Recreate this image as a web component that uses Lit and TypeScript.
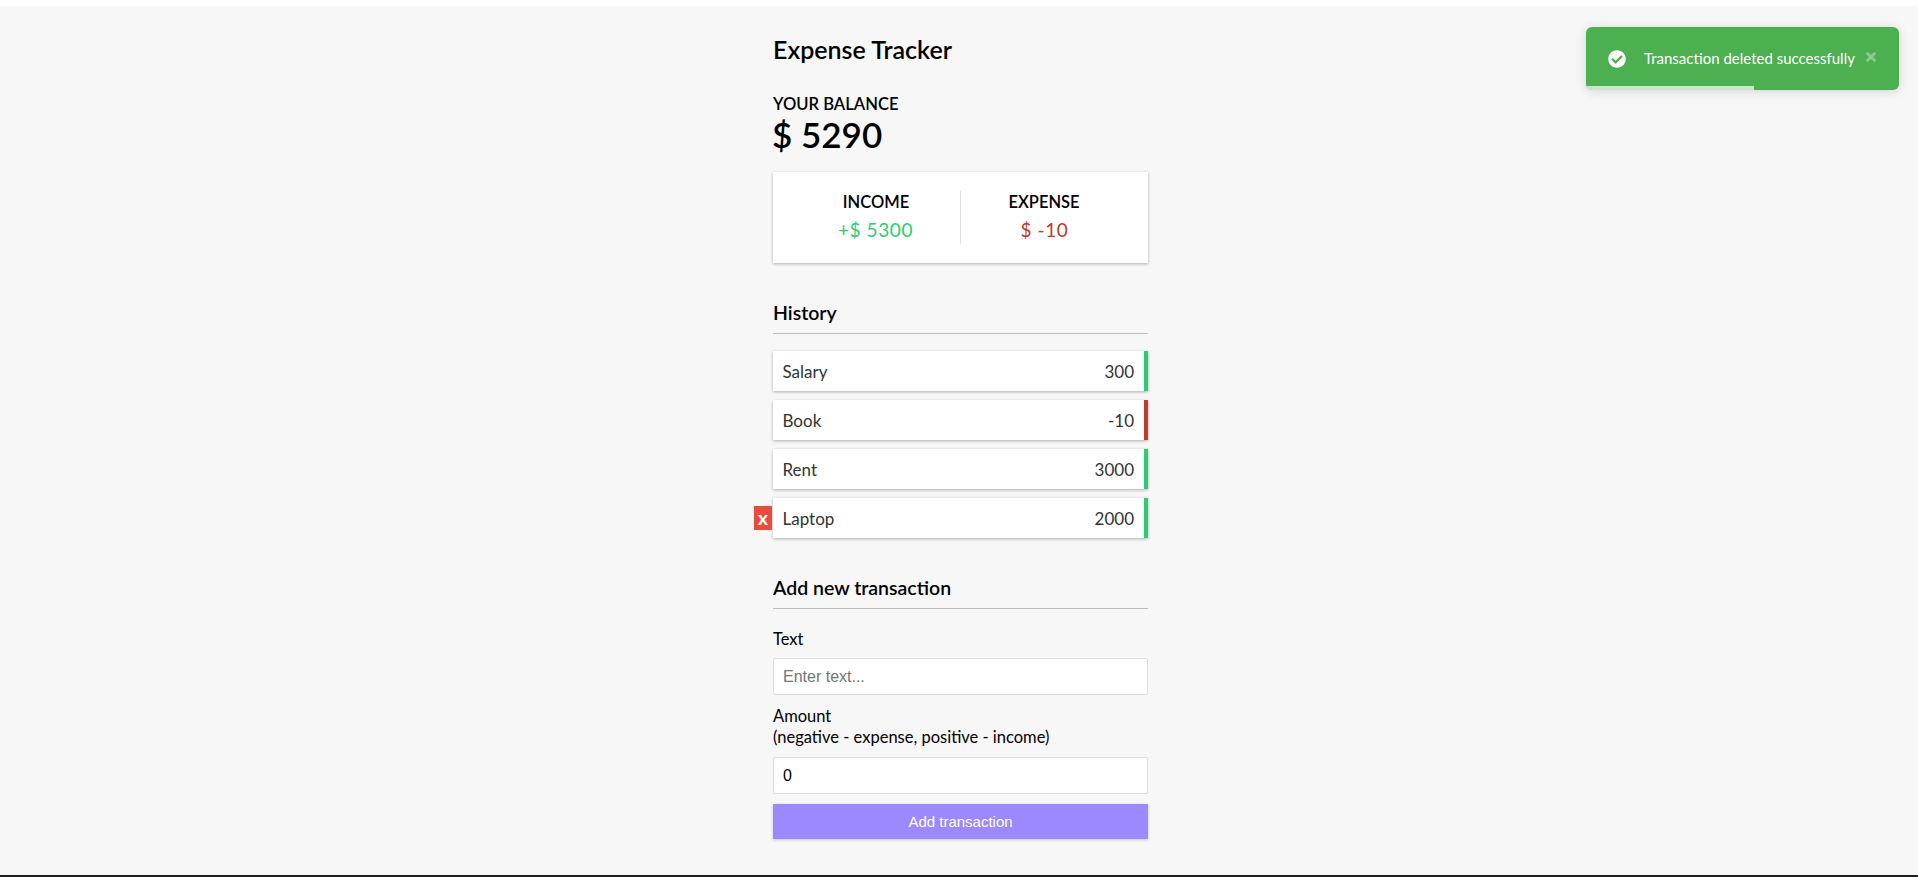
import { LitElement, html, css } from "lit";
import { customElement } from "lit/decorators.js";

const transactions = [
  { text: "Salary", amount: 300 },
  { text: "Book", amount: -10 },
  { text: "Rent", amount: 3000 },
  { text: "Laptop", amount: 2000, hovered: true },
];

@customElement("app-root")
export class AppRoot extends LitElement {
  static styles = css`
    :host {
      display: block;
      height: 877px;
      overflow: hidden;
      background: #fff;
      font-family: Lato, "Liberation Sans", sans-serif;
      color: #000;
      position: relative;
    }
    * {
      box-sizing: border-box;
    }
    .page {
      margin-top: 6px;
      height: 871px;
      background: #f7f7f7;
      border-bottom: 2px solid #1c1c1c;
      display: flex;
      justify-content: center;
    }
    .container {
      width: 375px;
      margin-left: 3px;
      padding-top: 27px;
    }
    h2 {
      margin: 0;
      font-size: 25px;
      line-height: 32px;
      font-weight: 600;
    }
    .balance-label {
      margin: 30px 0 0;
      font-size: 16.6px;
      line-height: 18px;
      font-weight: 600;
      text-transform: uppercase;
    }
    .balance {
      margin: 0 0 0 -1px;
      font-size: 35px;
      line-height: 42px;
      font-weight: 600;
    }
    .summary {
      margin-top: 17px;
      height: 91px;
      background: #fff;
      box-shadow: 0 1px 3px rgba(0, 0, 0, 0.3);
      display: flex;
      align-items: center;
      padding: 0 20px;
    }
    .summary > div {
      flex: 1;
      text-align: center;
      height: 53px;
    }
    .summary > div:first-child {
      border-right: 1px solid #dedede;
    }
    .summary h4 {
      margin: 0 0 0 -1px;
      font-size: 16.5px;
      line-height: 20px;
      padding-top: 1px;
      font-weight: 600;
      text-transform: uppercase;
    }
    .summary p {
      margin: 4px 0 0;
      font-size: 19px;
      line-height: 27px;
      letter-spacing: 0.6px;
    }
    .summary p.plus {
      margin-left: -2px;
    }
    .plus {
      color: #2ecc71;
    }
    .minus {
      color: #c0392b;
    }
    h3 {
      margin: 0;
      font-size: 19.5px;
      line-height: 24px;
      font-weight: 600;
      border-bottom: 1px solid #bbb;
      padding-bottom: 9px;
    }
    .history {
      margin-top: 37px;
    }
    .history h3 {
      padding-top: 1px;
      padding-bottom: 8px;
    }
    .list {
      list-style: none;
      margin: 17px 0 0;
      padding: 0;
    }
    .list li {
      position: relative;
      height: 40px;
      margin-bottom: 9px;
      padding: 0 10px 0 9.5px;
      background: #fff;
      color: #333;
      font-size: 17px;
      line-height: 21px;
      box-shadow: 0 1px 3px rgba(0, 0, 0, 0.3);
      display: flex;
      justify-content: space-between;
      align-items: center;
      border-right: 4px solid #2ecc71;
    }
    .list li.minus-item {
      border-right-color: #c0392b;
    }
    .delete {
      position: absolute;
      left: -19px;
      top: 8px;
      width: 18px;
      height: 24px;
      background: #e74c3c;
      color: #fff;
      font-size: 19px;
      font-weight: 700;
      display: flex;
      align-items: center;
      justify-content: center;
      line-height: 20px;
    }
    .add {
      margin-top: 38px;
    }
    .add h3 {
      padding-bottom: 8px;
    }
    label {
      display: block;
      font-size: 16.5px;
      line-height: 21px;
    }
    .text-label {
      margin-top: 20px;
    }
    .text-label + input {
      margin-top: 8px;
    }
    .amount-label {
      margin-top: 11px;
    }
    input {
      display: block;
      width: 100%;
      height: 37px;
      margin-top: 9px;
      padding: 10px 9px;
      border: 1px solid #dedede;
      border-radius: 2px;
      background: #fff;
      font-family: "Liberation Sans", Arial, sans-serif;
      font-size: 16px;
      color: #000;
    }
    input::placeholder {
      color: #757575;
    }
    button.btn {
      display: block;
      width: 100%;
      height: 35px;
      margin-top: 10px;
      border: 0;
      background: #9c88ff;
      color: #fff;
      font-family: "Liberation Sans", Arial, sans-serif;
      font-size: 15px;
      box-shadow: 0 1px 3px rgba(0, 0, 0, 0.2);
    }
    .toast {
      position: absolute;
      left: 1586px;
      top: 27px;
      width: 313px;
      height: 63px;
      border-radius: 6px;
      background: #4caf50;
      color: #fff;
      box-shadow: 0 1px 10px rgba(0, 0, 0, 0.1), 0 2px 15px rgba(0, 0, 0, 0.05);
      overflow: hidden;
      display: flex;
      align-items: center;
      padding: 0 0 0 22px;
      font-size: 15px;
    }
    .toast span {
      margin-top: -2px;
    }
    .toast svg.check {
      width: 18px;
      height: 18px;
      flex: none;
      margin-right: 18px;
    }
    .toast .close {
      width: 12px;
      height: 12px;
      margin-left: 10px;
      margin-top: -3px;
      opacity: 0.35;
      flex: none;
    }
    .progress {
      position: absolute;
      left: 0;
      bottom: 0;
      width: 168px;
      height: 4px;
      background: rgba(255, 255, 255, 0.7);
    }
  `;

  render() {
    return html`
      <div class="page">
        <div class="container">
          <h2>Expense Tracker</h2>
          <h4 class="balance-label">Your Balance</h4>
          <h1 class="balance">$ 5290</h1>
          <div class="summary">
            <div>
              <h4>Income</h4>
              <p class="plus">+$ 5300</p>
            </div>
            <div>
              <h4>Expense</h4>
              <p class="minus">$ -10</p>
            </div>
          </div>
          <section class="history">
            <h3>History</h3>
            <ul class="list">
              ${transactions.map(
                (t) => html`
                  <li class="${t.amount < 0 ? "minus-item" : ""}">
                    ${t.hovered ? html`<span class="delete">x</span>` : ""}
                    <span>${t.text}</span>
                    <span>${t.amount}</span>
                  </li>
                `
              )}
            </ul>
          </section>
          <section class="add">
            <h3>Add new transaction</h3>
            <label class="text-label">Text</label>
            <input type="text" placeholder="Enter text..." />
            <label class="amount-label">Amount<br />(negative - expense, positive - income)</label>
            <input type="number" value="0" />
            <button class="btn">Add transaction</button>
          </section>
        </div>
      </div>
      <div class="toast">
        <svg class="check" viewBox="0 0 512 512">
          <path
            fill="#fff"
            d="M504 256c0 137-111 248-248 248S8 393 8 256 119 8 256 8s248 111 248 248zM227.300 387.300l184-184c6.200-6.200 6.200-16.400 0-22.600l-22.600-22.600c-6.200-6.200-16.400-6.200-22.600 0L216 308.100l-70.100-70.100c-6.200-6.200-16.400-6.200-22.600 0l-22.600 22.600c-6.200 6.200-6.200 16.400 0 22.600l104 104c6.200 6.300 16.400 6.300 22.600 0z"
          />
        </svg>
        <span>Transaction deleted successfully</span>
        <svg class="close" viewBox="0 0 14 14">
          <path d="M2 2l10 10M12 2L2 12" stroke="#fff" stroke-width="3.4" fill="none" />
        </svg>
        <div class="progress"></div>
      </div>
    `;
  }
}
